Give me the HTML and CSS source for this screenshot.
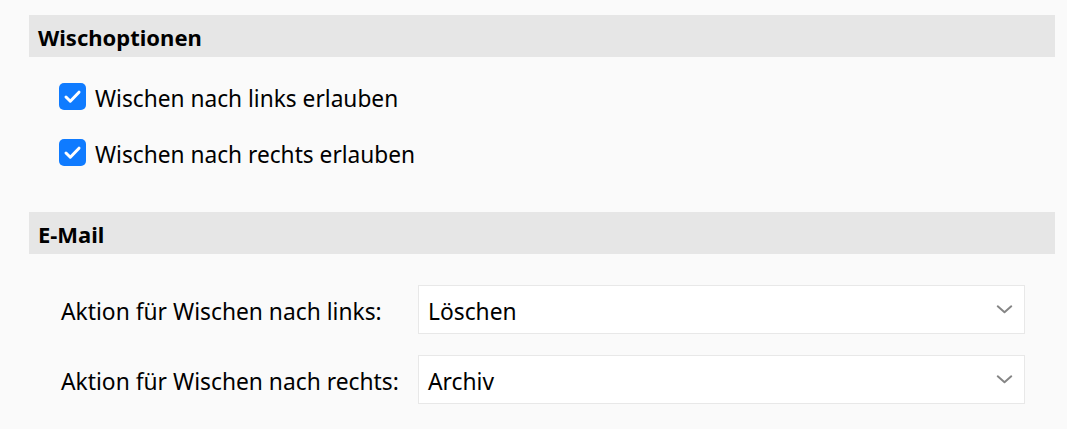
FILE: index.html
```html
<!DOCTYPE html>
<html lang="de">
<head>
<meta charset="utf-8">
<link rel="stylesheet" href="styles.css">
</head>
<body>
<div class="page">
  <div class="section-header">Wischoptionen</div>
  <div class="checks">
    <label class="check">
      <span class="box"><svg viewBox="0 0 27 27" width="27" height="27"><path d="M7 14 L11.3 18.2 L20 9.2" fill="none" stroke="#fff" stroke-width="3" stroke-linecap="round" stroke-linejoin="round"/></svg></span>
      <span class="check-text">Wischen nach links erlauben</span>
    </label>
    <label class="check">
      <span class="box"><svg viewBox="0 0 27 27" width="27" height="27"><path d="M7 14 L11.3 18.2 L20 9.2" fill="none" stroke="#fff" stroke-width="3" stroke-linecap="round" stroke-linejoin="round"/></svg></span>
      <span class="check-text">Wischen nach rechts erlauben</span>
    </label>
  </div>
  <div class="section-header">E-Mail</div>
  <div class="form">
    <div class="row">
      <span class="label">Aktion für Wischen nach links:</span>
      <div class="select"><span class="value">Löschen</span><svg class="chev" viewBox="0 0 18 10" width="18" height="10"><path d="M1.5 1.5 L9 8 L16.5 1.5" fill="none" stroke="#858585" stroke-width="2.2" stroke-linecap="round" stroke-linejoin="round"/></svg></div>
    </div>
    <div class="row">
      <span class="label">Aktion für Wischen nach rechts:</span>
      <div class="select"><span class="value">Archiv</span><svg class="chev" viewBox="0 0 18 10" width="18" height="10"><path d="M1.5 1.5 L9 8 L16.5 1.5" fill="none" stroke="#858585" stroke-width="2.2" stroke-linecap="round" stroke-linejoin="round"/></svg></div>
    </div>
  </div>
</div>
</body>
</html>
```
FILE: styles.css
```css
html, body {
  margin: 0;
  padding: 0;
  background: #fafafa;
}
body {
  font-family: "Noto Sans", "Open Sans", sans-serif;
  color: #000;
}
.page {
  padding: 15px 12px 0 29px;
}
.section-header {
  height: 42px;
  background: #e6e6e6;
  display: flex;
  align-items: center;
  padding-left: 9px;
  padding-top: 1px;
  box-sizing: border-box;
  font-size: 22px;
  font-weight: 700;
}
.checks {
  display: flex;
  flex-direction: column;
  gap: 29px;
  padding: 26px 0 46px 30px;
}
.check {
  display: flex;
  align-items: center;
  gap: 9px;
  height: 27px;
}
.box {
  width: 27px;
  height: 27px;
  border-radius: 5px;
  background: #0f7bff;
  display: flex;
  flex: none;
}
.box svg {
  width: 27px;
  height: 27px;
}
.check-text {
  font-size: 22.7px;
  padding-top: 3px;
}
.form {
  display: flex;
  flex-direction: column;
  gap: 21px;
  padding: 31px 0 0 32px;
}
.row {
  display: flex;
  align-items: center;
}
.label {
  width: 357px;
  font-size: 22.8px;
  padding-top: 4px;
}
.select {
  width: 607px;
  height: 49px;
  box-sizing: border-box;
  background: #fff;
  border: 1px solid #e8e8e8;
  display: flex;
  align-items: center;
  justify-content: space-between;
  padding: 0 11px 0 9px;
  font-size: 22.8px;
}
.value {
  padding-top: 4px;
}
.chev {
  width: 17px;
  height: 9px;
}
```
